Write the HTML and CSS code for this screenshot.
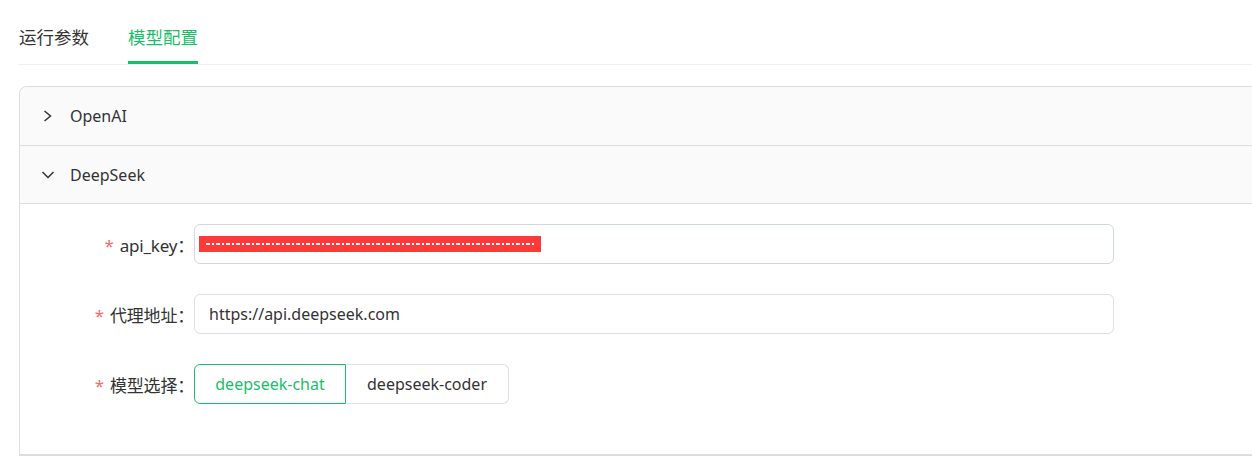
FILE: index.html
```html
<!DOCTYPE html>
<html lang="zh-CN">
<head>
  <meta charset="UTF-8">
  <meta name="viewport" content="width=device-width, initial-scale=1.0">
  <title>模型配置</title>
  <link rel="stylesheet" href="styles.css">
</head>
<body>
  <div class="page">
    <div class="tabs">
      <div class="tab">运行参数</div>
      <div class="tab active">模型配置</div>
    </div>

    <div class="collapse">
      <div class="collapse-item">
        <div class="collapse-header">
          <svg class="arrow" width="14" height="14" viewBox="0 0 14 14"><path d="M3.5 2 L9.5 7 L3.5 12" fill="none" stroke="#333" stroke-width="1.5"/></svg>
          <span>OpenAI</span>
        </div>
      </div>
      <div class="collapse-item open">
        <div class="collapse-header">
          <svg class="arrow" width="14" height="14" viewBox="0 0 14 14"><path d="M1.5 4 L7 9.5 L12.5 4" fill="none" stroke="#333" stroke-width="1.5"/></svg>
          <span>DeepSeek</span>
        </div>
        <div class="collapse-body">
          <div class="form-row">
            <label class="form-label"><i>*</i>api_key：</label>
            <div class="input focused">
              <span class="redacted"><span class="redacted-line"></span></span>
            </div>
          </div>
          <div class="form-row">
            <label class="form-label"><i>*</i>代理地址：</label>
            <div class="input">https://api.deepseek.com</div>
          </div>
          <div class="form-row">
            <label class="form-label"><i>*</i>模型选择：</label>
            <div class="radio-group">
              <div class="radio-btn checked">deepseek-chat</div>
              <div class="radio-btn">deepseek-coder</div>
            </div>
          </div>
        </div>
      </div>
    </div>
  </div>
</body>
</html>
```

FILE: styles.css
```css
:root {
  --green: #19be6b;
  --text: #333333;
  --border: #dcdfe6;
  --header-bg: #fafafa;
  --danger: #f56c6c;
}
html, body {
  margin: 0;
  overflow: hidden;
}
body {
  font-family: "Noto Sans", "Noto Sans CJK SC", sans-serif;
  color: var(--text);
  background: #fff;
}
.page {
  padding: 10px 0 0 19px;
  width: 1260px;
}
.tabs {
  display: flex;
  border-bottom: 1px solid #eeeeee;
}
.tab {
  height: 54px;
  line-height: 54px;
  font-size: 17.5px;
  margin-right: 39px;
  white-space: nowrap;
  box-sizing: border-box;
  border-bottom: 3px solid transparent;
}
.tab.active {
  color: var(--green);
  border-bottom-color: var(--green);
}
.collapse {
  margin-top: 21px;
  border: 1px solid #dddddd;
  border-right: none;
  border-radius: 8px 0 0 0;
  overflow: hidden;
}
.collapse-item {
  border-bottom: 1px solid #dddddd;
}
.collapse-header {
  height: 58px;
  display: flex;
  align-items: center;
  padding-left: 21px;
  background: var(--header-bg);
  font-size: 16px;
}
.collapse-item.open .collapse-header {
  height: 57px;
  border-bottom: 1px solid #dddddd;
}
.arrow {
  margin-right: 15px;
}
.collapse-body {
  padding: 20px 0 20px 0;
}
.form-row {
  display: flex;
  align-items: center;
  margin-bottom: 30px;
}
.form-label {
  width: 174px;
  box-sizing: border-box;
  text-align: right;
  font-size: 17px;
  letter-spacing: -0.2px;
}
.form-label i {
  font-style: normal;
  color: var(--danger);
  margin-right: 6px;
}
.input {
  width: 920px;
  height: 40px;
  box-sizing: border-box;
  border: 1px solid var(--border);
  border-radius: 6px;
  padding: 0 14px;
  display: flex;
  align-items: center;
  font-size: 16px;
}
.input.focused {
  border-color: #cfdad8;
  padding-left: 4px;
}
.redacted {
  width: 342px;
  height: 16px;
  background: #fd3a3a;
  display: flex;
  align-items: center;
  justify-content: center;
}
.redacted-line {
  width: 328px;
  height: 2px;
  background: repeating-linear-gradient(90deg, #fff 0 4px, transparent 4px 6px, #fff 6px 8px, transparent 8px 10px);
}
.radio-group {
  display: flex;
}
.radio-btn {
  height: 40px;
  box-sizing: border-box;
  display: flex;
  align-items: center;
  justify-content: center;
  font-size: 16px;
  border: 1px solid var(--border);
}
.radio-btn:first-child {
  border-radius: 6px 0 0 6px;
  width: 152px;
}
.radio-btn:last-child {
  border-left: none;
  border-radius: 0 6px 6px 0;
  width: 163px;
}
.radio-btn.checked {
  color: var(--green);
  border-color: var(--green);
}
```
